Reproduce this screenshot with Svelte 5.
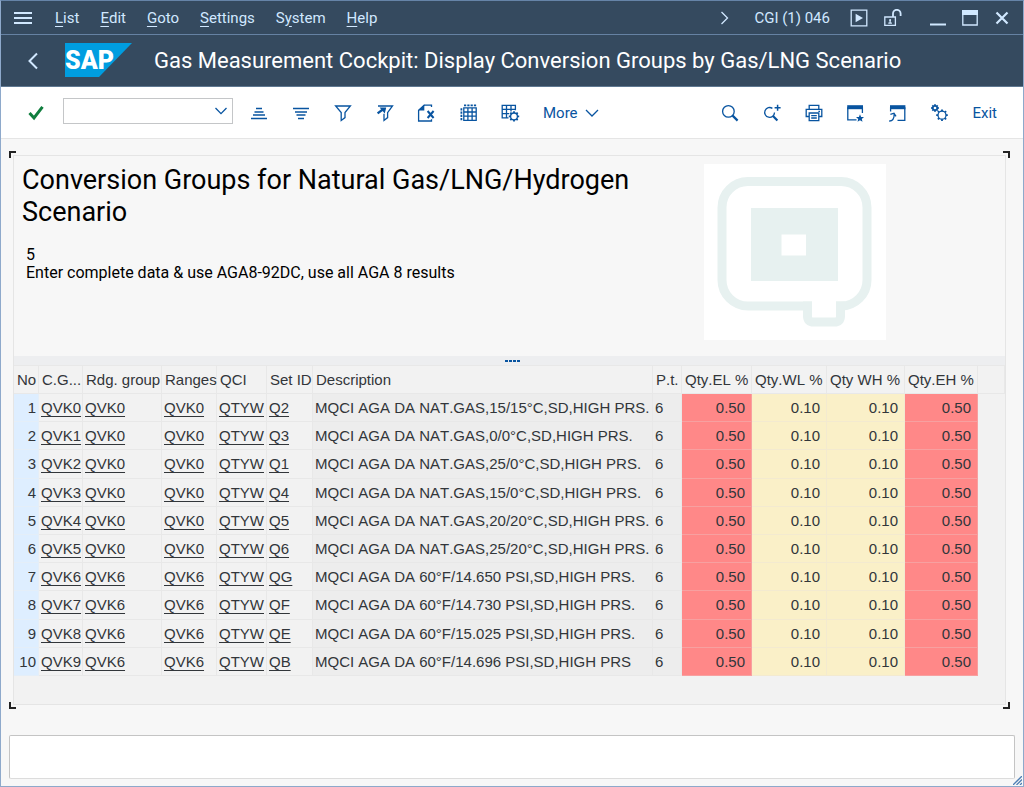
<script lang="ts">
  interface Group {
    no: number;
    cg: string;
    rdg: string;
    qci: string;
    set: string;
    text: string;
  }

  interface Column {
    label: string;
    width: number;
  }

  const menus = ["List", "Edit", "Goto", "Settings", "System", "Help"];

  const leftTools = [
    { icon: "asc", label: "Sort ascending" },
    { icon: "desc", label: "Sort descending" },
    { icon: "filter", label: "Set filter" },
    { icon: "unfilter", label: "Delete filter" },
    { icon: "excel", label: "Spreadsheet" },
    { icon: "grid", label: "Select layout" },
    { icon: "gridgear", label: "Change layout" },
  ];

  const rightTools = [
    { icon: "find", label: "Find" },
    { icon: "findnext", label: "Find next" },
    { icon: "print", label: "Print" },
    { icon: "favwin", label: "New GUI window" },
    { icon: "shortcut", label: "Create shortcut" },
    { icon: "gears", label: "Local layout" },
  ];

  const columns: Column[] = [
    { label: "No", width: 25 },
    { label: "C.G...", width: 44 },
    { label: "Rdg. group", width: 79 },
    { label: "Ranges", width: 55 },
    { label: "QCI", width: 50 },
    { label: "Set ID", width: 46 },
    { label: "Description", width: 340 },
    { label: "P.t.", width: 29 },
    { label: "Qty.EL %", width: 70 },
    { label: "Qty.WL %", width: 75 },
    { label: "Qty WH %", width: 78 },
    { label: "Qty.EH %", width: 73 },
  ];

  const groups: Group[] = [
    { no: 1, cg: "QVK0", rdg: "QVK0", qci: "QTYW", set: "Q2", text: "MQCI AGA DA NAT.GAS,15/15°C,SD,HIGH PRS." },
    { no: 2, cg: "QVK1", rdg: "QVK0", qci: "QTYW", set: "Q3", text: "MQCI AGA DA NAT.GAS,0/0°C,SD,HIGH PRS." },
    { no: 3, cg: "QVK2", rdg: "QVK0", qci: "QTYW", set: "Q1", text: "MQCI AGA DA NAT.GAS,25/0°C,SD,HIGH PRS." },
    { no: 4, cg: "QVK3", rdg: "QVK0", qci: "QTYW", set: "Q4", text: "MQCI AGA DA NAT.GAS,15/0°C,SD,HIGH PRS." },
    { no: 5, cg: "QVK4", rdg: "QVK0", qci: "QTYW", set: "Q5", text: "MQCI AGA DA NAT.GAS,20/20°C,SD,HIGH PRS." },
    { no: 6, cg: "QVK5", rdg: "QVK0", qci: "QTYW", set: "Q6", text: "MQCI AGA DA NAT.GAS,25/20°C,SD,HIGH PRS." },
    { no: 7, cg: "QVK6", rdg: "QVK6", qci: "QTYW", set: "QG", text: "MQCI AGA DA 60°F/14.650 PSI,SD,HIGH PRS." },
    { no: 8, cg: "QVK7", rdg: "QVK6", qci: "QTYW", set: "QF", text: "MQCI AGA DA 60°F/14.730 PSI,SD,HIGH PRS." },
    { no: 9, cg: "QVK8", rdg: "QVK6", qci: "QTYW", set: "QE", text: "MQCI AGA DA 60°F/15.025 PSI,SD,HIGH PRS." },
    { no: 10, cg: "QVK9", rdg: "QVK6", qci: "QTYW", set: "QB", text: "MQCI AGA DA 60°F/14.696 PSI,SD,HIGH PRS" },
  ];

  let command = $state("");
</script>

{#snippet gear(cx: number, cy: number, r: number)}
  {#each [0, 45, 90, 135, 180, 225, 270, 315] as a}
    <path
      d="M{cx} {cy - r}v-1.8"
      transform="rotate({a} {cx} {cy})"
      stroke-width="1.8"
    />
  {/each}
  <circle {cx} {cy} {r} />
{/snippet}

{#snippet icon(name: string)}
  <svg class="icon" viewBox="0 0 20 20" aria-hidden="true">
    {#if name === "asc"}
      <path d="M7 5.5h6M5.5 9h9M4 12h12M2 15.5h16" />
    {:else if name === "desc"}
      <path d="M2 5.5h16M4 9h12M5.5 12h9M7 15.5h6" />
    {:else if name === "filter"}
      <path d="M2.6 3h14.8L12 9.6v5L8.2 17.4V9.6z" />
    {:else if name === "unfilter"}
      <path d="M3 3h14.5L12.6 9.6v5L9 17.4V10.8" />
      <path d="M2.6 10.4L8.5 6" stroke-width="2.2" />
      <path class="solid" d="M4.6 4.6h6.6l-1.4 6z" />
    {:else if name === "excel"}
      <path d="M14.5 4V2.2H7.200L1.600 7.200V18h12.900v-1.800" />
      <path class="solid" d="M1.200 7.600L7.300 1.600v6z" />
      <path d="M10.600 8l6 7M16.600 8l-6 7" stroke-width="2" />
    {:else if name === "grid"}
      <path d="M4.800 4.900h12.400v12.400H4.800zM4.800 9h12.400M4.800 13.100h12.400M8.900 4.900v12.400M13.100 4.900v12.400" />
      <path d="M5 2.400h12.400" stroke-width="1.800" stroke-dasharray="2.200 1.100" />
      <path d="M2.400 5.200v12.200" stroke-width="1.800" stroke-dasharray="2.200 1.100" />
    {:else if name === "gridgear"}
      <path d="M7.500 14.800H1.200V2.300h13.200v5M1.200 6.400h13.200M1.200 10.600h7M5.500 2.300v12.500M10 2.300v6.200" />
      {@render gear(13, 13.4, 3.4)}
    {:else if name === "find"}
      <circle cx="8.4" cy="8.4" r="5.8" />
      <path d="M12.600 12.600l5 5" stroke-width="2.200" />
    {:else if name === "findnext"}
      <path d="M10.400 5.400A4.900 4.900 0 1 0 12.500 9.400" />
      <path d="M11 13l4.400 4.600" stroke-width="2.200" />
      <path d="M15.600 1.800v6M12.600 4.800h6" stroke-width="1.500" />
    {:else if name === "print"}
      <path d="M5.200 6V2.400h9.600V6M5.200 13.500H2.200V6.400h15.600v7.100h-3M5.200 10h9.600v7.600H5.200z" />
      <path d="M7.200 12.600h5.600M7.200 15h5.600M14.400 8.300h1.600" />
    {:else if name === "favwin"}
      <path d="M10.500 16.800H1.800V5h14.600v5" />
      <path class="solid" d="M1.200 2.200H17v4H1.200z" />
      <path class="solid" d="M14 11.200l1.100 2.700 2.900.2-2.200 1.900.7 2.800-2.500-1.500-2.500 1.500.7-2.800-2.200-1.900 2.900-.2z" />
    {:else if name === "shortcut"}
      <path d="M2.600 8.500V5h14.200v12.400H9.500" />
      <path class="solid" d="M2 2.200h15.400v4H2z" />
      <path d="M1.200 18c3 .2 5.200-1.800 5-7.200M2.400 11.400l3.600-1.200 2 3.200" />
    {:else if name === "gears"}
      {@render gear(5, 5, 2)}
      {@render gear(12, 12.2, 4)}
    {/if}
  </svg>
{/snippet}

<div class="window">
  <nav class="menubar" aria-label="Menu">
    <button class="bar-btn burger" aria-label="Menu">
      <svg width="18" height="14" viewBox="0 0 18 14"><path d="M0 2h18M0 7h18M0 12h18" stroke-width="2" /></svg>
    </button>
    {#each menus as menu}
      {#if menu === "System"}
        <button class="bar-btn">S<u>y</u>stem</button>
      {:else}
        <button class="bar-btn"><u>{menu[0]}</u>{menu.slice(1)}</button>
      {/if}
    {/each}
    <div class="menubar-end">
      <button class="bar-btn" aria-label="Show system info">
        <svg width="10" height="16" viewBox="0 0 10 16"><path d="M1.5 2l6 6-6 6" /></svg>
      </button>
      <span class="system">CGI (1) 046</span>
      <button class="bar-btn" aria-label="Record">
        <svg width="18" height="18" viewBox="0 0 18 18">
          <path d="M1.2 1.2h15.6v15.6H1.2z" />
          <path class="fill" d="M5.6 4.8l7.4 4.2-7.4 4.2z" />
        </svg>
      </button>
      <button class="bar-btn unlock" aria-label="Unlocked">
        <svg width="18" height="18" viewBox="0 0 18 18">
          <path d="M.8 8h10.6v8.4H.8z" />
          <path d="M9 8V4.600a3.600 3.600 0 0 1 7.600 0V7" stroke-width="1.800" />
          <circle class="fill" cx="6.1" cy="10.9" r="1" />
          <path d="M6.1 11v3.6M4.3 14.2h3.6" />
        </svg>
      </button>
      <button class="bar-btn" aria-label="Minimize">
        <svg width="16" height="16" viewBox="0 0 16 16"><path d="M0 14.500h16" stroke-width="2" /></svg>
      </button>
      <button class="bar-btn" aria-label="Maximize">
        <svg width="16" height="16" viewBox="0 0 16 16">
          <path d="M.8 1h14.4v14H.8z" />
          <path class="fill" d="M0 0h16v5H0z" />
        </svg>
      </button>
      <button class="bar-btn" aria-label="Close">
        <svg width="16" height="16" viewBox="0 0 16 16"><path d="M2.500 2.500l11 11M13.500 2.500l-11 11" stroke-width="2.200" /></svg>
      </button>
    </div>
  </nav>

  <header class="title-bar">
    <button class="bar-btn" aria-label="Back">
      <svg width="12" height="18" viewBox="0 0 12 18"><path d="M10 1.500L2.500 9l7.500 7.500" stroke-width="2" /></svg>
    </button>
    <svg class="sap" width="67" height="34" viewBox="0 0 67 34" role="img" aria-label="SAP">
      <path d="M0 0h67L34 34H0z" />
      <text x="0" y="26">SAP</text>
    </svg>
    <h1>Gas Measurement Cockpit: Display Conversion Groups by Gas/LNG Scenario</h1>
  </header>

  <div class="toolbar" role="toolbar" aria-label="Application toolbar">
    <button class="tool check" aria-label="Continue">
      <svg width="16" height="16" viewBox="0 0 16 16"><path d="M1.500 8l4.500 5L14.500 1.800" /></svg>
    </button>
    <div class="command">
      <input type="text" aria-label="Command" bind:value={command} />
      <button class="tool" aria-label="Command history">
        <svg class="chevron" width="14" height="8" viewBox="0 0 14 8"><path d="M1.500 1L7 6.600 12.500 1" /></svg>
      </button>
    </div>
    <div class="tools">
      {#each leftTools as tool}
        <button class="tool" aria-label={tool.label}>{@render icon(tool.icon)}</button>
      {/each}
      <button class="tool more">
        More
        <svg class="chevron" width="14" height="8" viewBox="0 0 14 8"><path d="M1 1l6 6 6-6" /></svg>
      </button>
    </div>
    <div class="tools tools--end">
      {#each rightTools as tool}
        <button class="tool" aria-label={tool.label}>{@render icon(tool.icon)}</button>
      {/each}
      <button class="tool">Exit</button>
    </div>
  </div>

  <main>
    <div class="frame">
      <span class="corner corner--tl"></span>
      <span class="corner corner--tr"></span>
      <span class="corner corner--bl"></span>
      <span class="corner corner--br"></span>
      <div class="panel">
        <section class="intro">
          <div class="intro-text">
            <h2>Conversion Groups for Natural Gas/LNG/Hydrogen Scenario</h2>
            <p>5</p>
            <p>Enter complete data &amp; use AGA8-92DC, use all AGA 8 results</p>
          </div>
          <svg class="emblem" width="182" height="176" viewBox="0 0 182 176" aria-hidden="true">
            <path d="M0 0h182v176H0z" fill="#fff" />
            <path
              d="M103.500 142H44a26 26 0 0 1-26-26V43.500a26 26 0 0 1 26-26h93a26 26 0 0 1 26 26V116a26 26 0 0 1-26 26h-.500v10q0 6-6 6h-21q-6 0-6-6z"
              fill="none"
              stroke="#e7f1f0"
              stroke-width="9"
            />
            <path d="M99 137.500h9v9h-9zM132 137.500h9v9h-9z" fill="#e7f1f0" />
            <path d="M47 44h87v73H47zM77.500 70.500v21H102v-21z" fill="#e7f1f0" fill-rule="evenodd" />
          </svg>
        </section>

        <div class="splitter"><i></i><i></i><i></i><i></i></div>

        <section class="grid-pane">
          <table>
            <colgroup>
              {#each columns as col}
                <col style="width: {col.width}px" />
              {/each}
              <col />
            </colgroup>
            <thead>
              <tr>
                {#each columns as col}
                  <th scope="col">{col.label}</th>
                {/each}
                <td></td>
              </tr>
            </thead>
            <tbody>
              {#each groups as g (g.no)}
                <tr>
                  <td class="num rowno">{g.no}</td>
                  <td><a href="#cg-{g.cg}">{g.cg}</a></td>
                  <td><a href="#rdg-{g.rdg}">{g.rdg}</a></td>
                  <td><a href="#range-{g.rdg}">{g.rdg}</a></td>
                  <td><a href="#qci-{g.qci}">{g.qci}</a></td>
                  <td><a href="#set-{g.set}">{g.set}</a></td>
                  <td class="plain">{g.text}</td>
                  <td class="plain">6</td>
                  <td class="num error">0.50</td>
                  <td class="num warn">0.10</td>
                  <td class="num warn">0.10</td>
                  <td class="num error">0.50</td>
                  <td class="rest"></td>
                </tr>
              {/each}
            </tbody>
          </table>
        </section>
      </div>
    </div>

    <div class="status" role="status"></div>
    <svg class="grip" width="9" height="9" viewBox="0 0 9 9" aria-hidden="true">
      <path d="M0 9L9 0M3.500 9L9 3.500M7 9l2-2" />
    </svg>
  </main>
</div>

<style>
  :global(body) {
    margin: 0;
  }
  .window {
    --c-bar: #354a5f;
    --c-bar-text: #d1e8ff;
    --c-link: #0854a0;
    --c-line: #e5e5e5;
    box-sizing: border-box;
    display: flex;
    flex-direction: column;
    min-height: 100vh;
    border: 1px solid #8ea9cb;
    border-top-color: #6684a8;
    background: #f7f7f7;
    font-family: Roboto, "Liberation Sans", sans-serif;
    font-size: 15px;
    color: #000;
  }
  button {
    display: flex;
    align-items: center;
    padding: 0;
    border: 0;
    background: none;
    font: inherit;
    color: inherit;
    cursor: pointer;
  }
  svg {
    display: block;
    flex-shrink: 0;
    fill: none;
    stroke: currentColor;
    stroke-width: 1.3;
  }

  .menubar {
    display: flex;
    align-items: center;
    gap: 21px;
    height: 33px;
    padding: 0 13px;
    border-bottom: 1px solid #6682a3;
    background: var(--c-bar);
    color: var(--c-bar-text);
  }
  .bar-btn {
    color: var(--c-bar-text);
  }
  .burger {
    margin-right: 2px;
  }
  .bar-btn u {
    text-underline-offset: 3px;
  }
  .fill {
    fill: currentColor;
    stroke: none;
  }
  .menubar-end {
    display: flex;
    align-items: center;
    gap: 16px;
    margin-left: auto;
  }
  .system {
    margin: 0 4px 0 8px;
  }
  .unlock {
    margin-right: 12px;
  }

  .title-bar {
    display: flex;
    align-items: center;
    height: 51px;
    padding-left: 26px;
    border-bottom: 1px solid #5f7891;
    background: var(--c-bar);
  }
  .sap {
    margin: 0 22px 2px 26px;
    stroke: none;
  }
  .sap path {
    fill: #009de0;
  }
  .sap text {
    fill: #fff;
    font-size: 25px;
    font-weight: 900;
  }
  h1 {
    margin: 0;
    color: #fff;
    font-size: 22px;
    font-weight: 400;
  }

  .toolbar {
    display: flex;
    align-items: center;
    height: 51px;
    padding: 0 26px 0 27px;
    border-bottom: 1px solid var(--c-line);
    background: #fff;
    color: var(--c-link);
  }
  .check {
    color: #107e3e;
  }
  .check svg {
    stroke-width: 3;
  }
  .command {
    box-sizing: border-box;
    display: flex;
    align-items: center;
    width: 170px;
    height: 26px;
    margin: 0 16px 4px 19px;
    padding-right: 4px;
    border: 1px solid #c4c6c8;
  }
  .command input {
    flex: 1;
    min-width: 0;
    border: 0;
    outline: 0;
    background: none;
    font: inherit;
  }
  .icon {
    width: 20px;
    height: 20px;
  }
  .solid {
    fill: currentColor;
    stroke: none;
  }
  .tools {
    display: flex;
    align-items: center;
    gap: 22px;
  }
  .tools--end {
    margin-left: auto;
  }
  .more {
    gap: 7px;
  }

  main {
    position: relative;
    display: flex;
    flex: 1;
    flex-direction: column;
    padding: 12px 8px 7px;
  }
  .frame {
    position: relative;
    display: flex;
    flex: 1;
    margin: 0 5px 26px 0;
    padding: 4px;
  }
  .corner {
    position: absolute;
    width: 5px;
    height: 5px;
    border: 0 solid #222;
  }
  .corner--tl {
    top: 0;
    left: 0;
    border-width: 2px 0 0 2px;
  }
  .corner--tr {
    top: 0;
    right: 0;
    border-width: 2px 2px 0 0;
  }
  .corner--bl {
    bottom: 0;
    left: 0;
    border-width: 0 0 2px 2px;
  }
  .corner--br {
    right: 0;
    bottom: 0;
    border-width: 0 2px 2px 0;
  }
  .panel {
    display: flex;
    flex: 1;
    flex-direction: column;
    min-width: 0;
    border: 1px solid var(--c-line);
  }
  .intro {
    display: flex;
    align-items: flex-start;
    justify-content: space-between;
    gap: 40px;
    min-height: 192px;
    padding: 8px 119px 0 8px;
  }
  .intro-text {
    flex: 1;
  }
  h2 {
    margin: 0 0 18px;
    font-size: 27px;
    font-weight: 400;
    line-height: 32px;
  }
  p {
    margin: 0 0 0 4px;
    font-size: 16px;
    line-height: 18px;
  }
  .emblem {
    stroke: none;
  }
  .splitter {
    display: flex;
    align-items: center;
    justify-content: center;
    gap: 1px;
    height: 9px;
    padding-left: 6px;
    background: #edeef0;
  }
  .splitter i {
    width: 3px;
    height: 2px;
    background: var(--c-link);
  }

  .grid-pane {
    flex: 1;
    background: #f2f2f2;
    font-family: "Liberation Sans", Arial, sans-serif;
    font-kerning: none;
    color: #32363a;
  }
  table {
    width: 100%;
    height: 311px;
    table-layout: fixed;
    border-collapse: separate;
    border-spacing: 0;
  }
  th,
  td {
    box-sizing: border-box;
    height: 28px;
    padding: 0 0 0 2px;
    border: 0 solid #e8e8e8;
    border-width: 0 1px 1px 0;
    font-weight: 400;
    text-align: left;
    white-space: nowrap;
  }
  thead th,
  thead td {
    height: 29px;
    padding-left: 3px;
    border-top-width: 1px;
  }
  tbody .rest {
    border: 0;
  }
  a {
    color: inherit;
    text-decoration-thickness: 1px;
    text-underline-offset: 3px;
  }
  .plain {
    background: #ededed;
  }
  .num {
    padding: 0 6px 0 0;
    text-align: right;
  }
  .rowno {
    padding-right: 2px;
    background: #deeeff;
    border-color: #e4eef8;
  }
  .error {
    background: #ff8888;
    border-color: #f7a0a0;
  }
  .warn {
    background: #faf0c8;
    border-color: #f3ead0;
  }

  .status {
    box-sizing: border-box;
    height: 44px;
    border: 1px solid #c4c4c4;
    border-bottom-color: #dcdcdc;
    border-radius: 2px;
    background: #fff;
  }
  .grip {
    position: absolute;
    right: 1px;
    bottom: 1px;
    color: #4f7fb5;
  }
</style>
